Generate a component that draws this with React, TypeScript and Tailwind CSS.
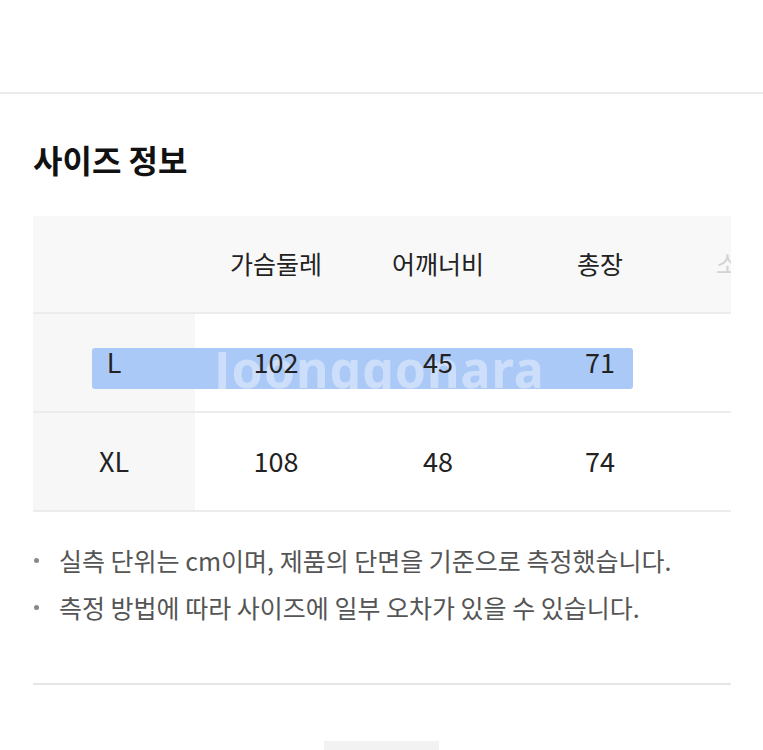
import React from "react";

const cols = ["가슴둘레", "어깨너비", "총장", "소매길이"];
const rows = [
  { size: "L", vals: ["102", "45", "71", ""] },
  { size: "XL", vals: ["108", "48", "74", ""] },
];

export default function App() {
  return (
    <div className="w-[763px] min-h-[750px] bg-white overflow-hidden font-['Noto_Sans_CJK_KR','Noto_Sans',sans-serif] text-[#222]">
      <div className="h-[92px]" />
      <div className="h-[2px] bg-[#ebebeb]" />
      <div className="px-[33px]">
        <h2 className="mt-[42px] text-[32px] leading-[46px] font-semibold text-[#111]">
          사이즈 정보
        </h2>

        <div className="relative mt-[34px] w-[698px] overflow-hidden">
          {/* header */}
          <div className="flex h-[96px] items-center bg-[#f8f8f8]">
            <div className="w-[162px] shrink-0" />
            {cols.map((c, i) => (
              <div
                key={c}
                className={`w-[162px] shrink-0 text-center text-[25px] ${i === 3 ? "text-[#d4d4d4]" : "text-[#222]"}`}
              >
                {c}
              </div>
            ))}
          </div>

          {rows.map((r, ri) => (
            <div key={r.size} className="relative border-t-2 border-[#ececec]">
              {ri === 0 && (
                <div className="absolute z-[1] left-[59px] top-[34px] h-[41px] w-[541px] rounded-[3px] bg-[#abc9f7] overflow-hidden flex items-center">
                  <span className="ml-[122px] text-[50px] font-bold leading-none text-white/40 font-['Noto_Sans',sans-serif] tracking-[1px]">
                    Joonggonara
                  </span>
                </div>
              )}
              <div className="flex h-[97px] items-center text-[27px]">
                <div className="flex h-full w-[162px] shrink-0 items-center justify-center bg-[#f7f7f7]">
                  <span className="relative z-[2]">{r.size}</span>
                </div>
                {r.vals.map((v, i) => (
                  <div key={i} className="w-[162px] shrink-0 text-center">
                    <span className="relative z-[2]">{v}</span>
                  </div>
                ))}
              </div>
            </div>
          ))}
          <div className="h-[2px] bg-[#ececec]" />
        </div>

        <ul className="mt-[25px] text-[25px] text-[#555]">
          {[
            "실측 단위는 cm이며, 제품의 단면을 기준으로 측정했습니다.",
            "측정 방법에 따라 사이즈에 일부 오차가 있을 수 있습니다.",
          ].map((t) => (
            <li key={t} className="flex h-[47px] items-center">
              <span className="ml-[1px] mr-[20px] h-[5px] w-[5px] shrink-0 rounded-full bg-[#888]" />
              <span className="whitespace-nowrap">{t}</span>
            </li>
          ))}
        </ul>

        <div className="mt-[52px] h-[2px] w-[698px] bg-[#e6e6e6]" />
      </div>

      <div className="mt-[56px] flex justify-center">
        <div className="h-[20px] w-[115px] bg-[#f2f2f2]" />
      </div>
    </div>
  );
}
